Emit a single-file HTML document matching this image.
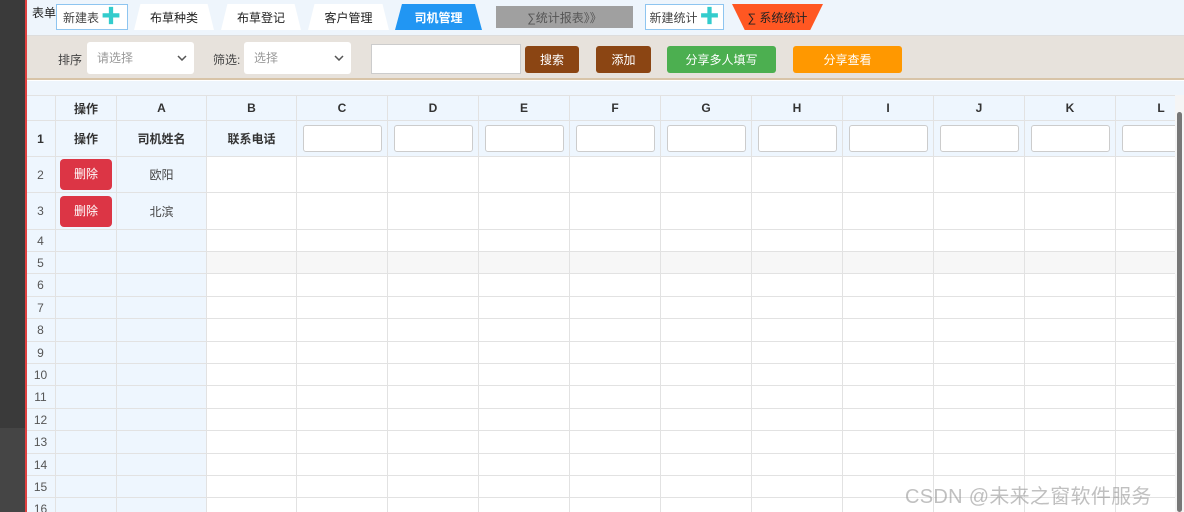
<!DOCTYPE html>
<html><head><meta charset="utf-8"><style>
*{box-sizing:border-box;margin:0;padding:0}
body{width:1184px;height:512px;overflow:hidden;background:#fff;font-family:"Liberation Sans","Noto Sans CJK SC",sans-serif;font-size:12px;color:#333;position:relative}
.a{position:absolute}
.dark{left:0;top:0;width:25px;height:428px;background:#3a3a3a}
.dark2{left:0;top:428px;width:25px;height:84px;background:#454545}
.red{left:25px;top:0;width:2px;height:512px;background:#e04040;z-index:10}
.nav{left:26px;top:0;width:1158px;height:35px;background:#eef5fc}
.tab{height:26px;top:4px;display:flex;align-items:center;justify-content:center;font-size:12px;color:#222}
.trap{clip-path:polygon(8% 0,92% 0,100% 100%,0 100%);background:#fff;filter:drop-shadow(0 1px 0 #bbb)}
.tb{left:26px;top:35px;width:1158px;height:45px;background:#e7e2dc;border-bottom:2px solid #d8c4a8;border-top:1px solid #ddd}
.sel{background:#fff;border-radius:3px;height:32px;top:42px;color:#999;font-size:12px;padding-left:10px;line-height:32px}
.sel svg{position:absolute;right:7px;top:13px}
.btn{top:46px;height:27px;border-radius:3px;color:#fff;font-size:12px;display:flex;align-items:center;justify-content:center}
.strip{left:26px;top:81px;width:1158px;height:14px;background:#eef5fc}
.wrap{left:26px;top:95px;width:1149px;height:417px;overflow:hidden}
table{border-collapse:collapse;table-layout:fixed;width:1180px;margin-left:-1px}
td{border:1px solid #e2e2e2;text-align:center;font-size:12px;color:#444;overflow:hidden;white-space:nowrap;padding:0}
tr.h td{background:#eef6fe;font-weight:bold;color:#333}
td.l{background:#eef6fe}
td.n{background:#eef6fe;color:#555}
tr.g td{background:#f7f7f7}
tr.g td.l,tr.g td.n{background:#eef6fe}
.in{display:block;margin:0 auto;width:79px;height:27px;border:1px solid #ccc;border-radius:3px;background:#fff}
.del{display:inline-block;width:52px;height:31px;line-height:31px;background:#dc3545;color:#fff;border-radius:4px;font-size:12px}
.sb{left:1175px;top:95px;width:9px;height:417px;background:#f5f5f5}
.thumb{left:1177px;top:112px;width:5px;height:400px;background:#777;border-radius:3px}
.wm{left:905px;top:480px;font-size:20px;color:rgba(150,150,150,.6);letter-spacing:0.3px}
</style></head><body>
<div class="a dark"></div><div class="a dark2"></div>
<div class="a nav"></div>
<div class="a red"></div>
<div class="a" style="left:32px;top:4px;font-size:12px;color:#222">表单</div>
<div class="a tab" style="left:56px;width:72px;background:#fff;border:1px solid #8ec5f0;color:#444">新建表 <span style="color:#3cc;font-size:20px;font-weight:bold;margin-left:2px;line-height:1">✚</span></div>
<div class="a tab trap" style="left:134px;width:80px">布草种类</div>
<div class="a tab trap" style="left:221px;width:80px">布草登记</div>
<div class="a tab trap" style="left:308px;width:81px">客户管理</div>
<div class="a tab" style="left:395px;width:87px;background:#2196f3;color:#fff;font-weight:bold;clip-path:polygon(8% 0,92% 0,100% 100%,0 100%)">司机管理</div>
<div class="a tab" style="left:496px;top:6px;height:22px;width:137px;background:#a0a0a0;color:#555">∑统计报表》》</div>
<div class="a tab" style="left:645px;width:79px;background:#fff;border:1px solid #8ec5f0;color:#444">新建统计 <span style="color:#3cc;font-size:20px;font-weight:bold;margin-left:2px;line-height:1">✚</span></div>
<div class="a tab" style="left:732px;width:91px;background:#ff5722;color:#222;clip-path:polygon(0 0,100% 0,86% 100%,14% 100%)">∑ 系统统计</div>

<div class="a tb"></div>
<div class="a" style="left:58px;top:51px;color:#444">排序</div>
<div class="a sel" style="left:87px;width:107px">请选择<svg width="10" height="6"><path d="M1 1L5 5L9 1" stroke="#555" stroke-width="1.5" fill="none"/></svg></div>
<div class="a" style="left:213px;top:51px;color:#444">筛选:</div>
<div class="a sel" style="left:244px;width:107px">选择<svg width="10" height="6"><path d="M1 1L5 5L9 1" stroke="#555" stroke-width="1.5" fill="none"/></svg></div>
<div class="a" style="left:371px;top:44px;width:150px;height:30px;background:#fff;border:1px solid #ccc"></div>
<div class="a btn" style="left:525px;width:54px;background:#8b4513">搜索</div>
<div class="a btn" style="left:596px;width:55px;background:#8b4513">添加</div>
<div class="a btn" style="left:667px;width:109px;background:#4caf50">分享多人填写</div>
<div class="a btn" style="left:793px;width:109px;background:#ff9800">分享查看</div>
<div class="a strip"></div>

<div class="a wrap"><table>
<colgroup><col style="width:30px"><col style="width:61px"><col style="width:90px"><col style="width:90px"><col style="width:91px"><col style="width:91px"><col style="width:91px"><col style="width:91px"><col style="width:91px"><col style="width:91px"><col style="width:91px"><col style="width:91px"><col style="width:91px"><col style="width:91px"></colgroup>
<tr class="h" style="height:25px"><td></td><td>操作</td><td>A</td><td>B</td><td>C</td><td>D</td><td>E</td><td>F</td><td>G</td><td>H</td><td>I</td><td>J</td><td>K</td><td>L</td></tr>
<tr class="h" style="height:36px"><td>1</td><td>操作</td><td>司机姓名</td><td>联系电话</td><td><span class="in"></span></td><td><span class="in"></span></td><td><span class="in"></span></td><td><span class="in"></span></td><td><span class="in"></span></td><td><span class="in"></span></td><td><span class="in"></span></td><td><span class="in"></span></td><td><span class="in"></span></td><td><span class="in"></span></td></tr>
<tr style="height:36px"><td class="n">2</td><td class="l"><span class="del">删除</span></td><td class="l">欧阳</td><td></td><td></td><td></td><td></td><td></td><td></td><td></td><td></td><td></td><td></td><td></td></tr>
<tr style="height:37px"><td class="n">3</td><td class="l"><span class="del">删除</span></td><td class="l">北滨</td><td></td><td></td><td></td><td></td><td></td><td></td><td></td><td></td><td></td><td></td><td></td></tr>
<tr style="height:22px"><td class="n">4</td><td class="l"></td><td class="l"></td><td></td><td></td><td></td><td></td><td></td><td></td><td></td><td></td><td></td><td></td><td></td></tr>
<tr class="g" style="height:22px"><td class="n">5</td><td class="l"></td><td class="l"></td><td></td><td></td><td></td><td></td><td></td><td></td><td></td><td></td><td></td><td></td><td></td></tr>
<tr style="height:23px"><td class="n">6</td><td class="l"></td><td class="l"></td><td></td><td></td><td></td><td></td><td></td><td></td><td></td><td></td><td></td><td></td><td></td></tr>
<tr style="height:22px"><td class="n">7</td><td class="l"></td><td class="l"></td><td></td><td></td><td></td><td></td><td></td><td></td><td></td><td></td><td></td><td></td><td></td></tr>
<tr style="height:23px"><td class="n">8</td><td class="l"></td><td class="l"></td><td></td><td></td><td></td><td></td><td></td><td></td><td></td><td></td><td></td><td></td><td></td></tr>
<tr style="height:22px"><td class="n">9</td><td class="l"></td><td class="l"></td><td></td><td></td><td></td><td></td><td></td><td></td><td></td><td></td><td></td><td></td><td></td></tr>
<tr style="height:22px"><td class="n">10</td><td class="l"></td><td class="l"></td><td></td><td></td><td></td><td></td><td></td><td></td><td></td><td></td><td></td><td></td><td></td></tr>
<tr style="height:23px"><td class="n">11</td><td class="l"></td><td class="l"></td><td></td><td></td><td></td><td></td><td></td><td></td><td></td><td></td><td></td><td></td><td></td></tr>
<tr style="height:22px"><td class="n">12</td><td class="l"></td><td class="l"></td><td></td><td></td><td></td><td></td><td></td><td></td><td></td><td></td><td></td><td></td><td></td></tr>
<tr style="height:23px"><td class="n">13</td><td class="l"></td><td class="l"></td><td></td><td></td><td></td><td></td><td></td><td></td><td></td><td></td><td></td><td></td><td></td></tr>
<tr style="height:22px"><td class="n">14</td><td class="l"></td><td class="l"></td><td></td><td></td><td></td><td></td><td></td><td></td><td></td><td></td><td></td><td></td><td></td></tr>
<tr style="height:22px"><td class="n">15</td><td class="l"></td><td class="l"></td><td></td><td></td><td></td><td></td><td></td><td></td><td></td><td></td><td></td><td></td><td></td></tr>
<tr style="height:23px"><td class="n">16</td><td class="l"></td><td class="l"></td><td></td><td></td><td></td><td></td><td></td><td></td><td></td><td></td><td></td><td></td><td></td></tr>
</table></div>
<div class="a sb"></div><div class="a thumb"></div>
<div class="a wm">CSDN @未来之窗软件服务</div>
</body></html>
